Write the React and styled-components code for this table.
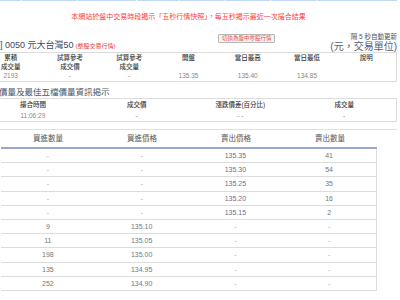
import React from 'react';
import styled, { createGlobalStyle } from 'styled-components';

const GlobalStyle = createGlobalStyle`
  html, body {
    margin: 0;
    padding: 0;
    background: #fff;
    overflow: hidden;
  }
  body {
    font-family: "Liberation Sans", "Noto Sans CJK TC", sans-serif;
  }
`;

const Page = styled.div`
  width: 417px;
  margin-left: -20px;
`;

const Nav = styled.div`
  display: flex;
  gap: 1px;
  height: 1px;
`;

const NavTab = styled.div`
  flex: ${({ $w }) => ($w ? `0 0 ${$w}px` : '1')};
  background: #c2d7f7;
`;

const Notice = styled.div`
  margin-top: 11px;
  text-align: center;
  color: #ff3c3c;
  font-size: 7px;
  line-height: 10px;
  white-space: nowrap;
`;

const InfoBar = styled.div`
  margin-top: 11px;
  height: 19px;
  padding-left: 20px;
  display: flex;
  align-items: flex-end;
`;

const Title = styled.div`
  font-size: 9px;
  line-height: 11px;
  color: #3d4a66;
  white-space: nowrap;
`;

const TitleNote = styled.span`
  margin-left: 2px;
  font-size: 6px;
  color: #e83333;
`;

const SwitchButton = styled.button`
  margin-left: auto;
  align-self: flex-start;
  margin-top: 1px;
  width: 57px;
  height: 9px;
  padding: 0;
  font-family: inherit;
  font-size: 5.5px;
  line-height: 7px;
  color: #e55050;
  background: #f3f3f3;
  border: 1px solid #b8b8b8;
  border-radius: 1px;
  white-space: nowrap;
`;

const RightBlock = styled.div`
  margin-left: 55px;
  align-self: stretch;
  display: flex;
  flex-direction: column;
  align-items: flex-end;
`;

const Refresh = styled.div`
  font-size: 6.5px;
  line-height: 8px;
  color: #555;
  white-space: nowrap;
`;

const Units = styled.div`
  font-size: 10px;
  line-height: 11px;
  color: #56607a;
  white-space: nowrap;
`;

const Grid = styled.div`
  display: grid;
  grid-template-columns: repeat(${({ $cols }) => $cols}, 1fr);
  border: 1px solid #dcdcdc;
  padding-bottom: ${({ $pb }) => $pb || 0}px;
`;

const Cell = styled.div`
  text-align: center;
  font-size: 6.5px;
  line-height: ${({ $lh }) => $lh || 9}px;
  color: ${({ $head }) => ($head ? '#3a3a3a' : '#888')};
  font-weight: ${({ $head }) => ($head ? 500 : 400)};
  white-space: nowrap;
`;

const SectionTitle = styled.div`
  margin-top: 5px;
  padding-left: 19px;
  font-size: 8.5px;
  line-height: 11px;
  color: #4b5565;
  white-space: nowrap;
`;

const OrderBox = styled.div`
  margin-top: 7px;
  margin-left: 20px;
  padding-left: 1px;
  border-top: 1px solid #e0e0e0;
`;

const OrderTable = styled.div`
  width: 376px;
`;

const OrderHead = styled.div`
  display: grid;
  grid-template-columns: repeat(4, 1fr);
  border-bottom: 2px solid #9aa6cf;
`;

const HeadCell = styled.div`
  text-align: center;
  font-size: 7.5px;
  line-height: 17px;
  color: #555;
`;

const OrderRows = styled.div`
  border-right: 1px solid #dcdcdc;
`;

const OrderRow = styled.div`
  display: grid;
  grid-template-columns: repeat(4, 1fr);
  border-bottom: 1px solid #dcdcdc;
`;

const OrderCell = styled.div`
  text-align: center;
  font-size: 7px;
  line-height: 13.2px;
  color: ${({ $tone }) => $tone};
`;

const navWidths = [41, 55, 58, 42, 45, 44, 45, null];

const quoteRows = [
  ['累積', '試算參考', '試算參考', '開盤', '當日最高', '當日最低', '說明'],
  ['成交量', '成交價', '成交量', '', '', '', ''],
];
const quoteData = ['2193', '-', '-', '135.35', '135.40', '134.85', ''];

const book = [
  ['-', '-', '135.35', '41'],
  ['-', '-', '135.30', '54'],
  ['-', '-', '135.25', '35'],
  ['-', '-', '135.20', '16'],
  ['-', '-', '135.15', '2'],
  ['9', '135.10', '-', '-'],
  ['11', '135.05', '-', '-'],
  ['198', '135.00', '-', '-'],
  ['135', '134.95', '-', '-'],
  ['252', '134.90', '-', '-'],
];

const toneFor = (v, i) => {
  if (v === '-') return '#aaa';
  if (i === 2) return '#6f6d8e';
  return '#777';
};

const App = () => {
  return (
    <>
      <GlobalStyle />
      <Page>
        <Nav>
          {navWidths.map((w, i) => (
            <NavTab key={i} $w={w} />
          ))}
        </Nav>
        <Notice>本網站於盤中交易時段揭示「五秒行情快照」，每五秒揭示最近一次撮合結果</Notice>
        <InfoBar>
          <Title>
            ] 0050 元大台灣50<TitleNote>(整股交易行情)</TitleNote>
          </Title>
          <SwitchButton>切換為盤中零股行情</SwitchButton>
          <RightBlock>
            <Refresh>隔 5 秒自動更新</Refresh>
            <Units>(元，交易單位)</Units>
          </RightBlock>
        </InfoBar>
        <Grid $cols={7} $pb={1}>
          {quoteRows.map((row) =>
            row.map((c, i) => (
              <Cell key={row[0] + i} $head>
                {c}
              </Cell>
            ))
          )}
          {quoteData.map((c, i) => (
            <Cell key={'d' + i}>{c}</Cell>
          ))}
        </Grid>
        <SectionTitle>價量及最佳五檔價量資訊揭示</SectionTitle>
        <Grid $cols={4} $pb={0}>
          {['撮合時間', '成交價', '漲跌價差(百分比)', '成交量'].map((c) => (
            <Cell key={c} $head $lh={12}>
              {c}
            </Cell>
          ))}
          {['11:06:29', '-', '- -', '-'].map((c, i) => (
            <Cell key={'t' + i} $lh={10}>
              {c}
            </Cell>
          ))}
        </Grid>
        <OrderBox>
          <OrderTable>
            <OrderHead>
              {['買進數量', '買進價格', '賣出價格', '賣出數量'].map((c) => (
                <HeadCell key={c}>{c}</HeadCell>
              ))}
            </OrderHead>
            <OrderRows>
              {book.map((row, r) => (
                <OrderRow key={r}>
                  {row.map((v, i) => (
                    <OrderCell key={i} $tone={toneFor(v, i)}>
                      {v}
                    </OrderCell>
                  ))}
                </OrderRow>
              ))}
            </OrderRows>
          </OrderTable>
        </OrderBox>
      </Page>
    </>
  );
};

export default App;
